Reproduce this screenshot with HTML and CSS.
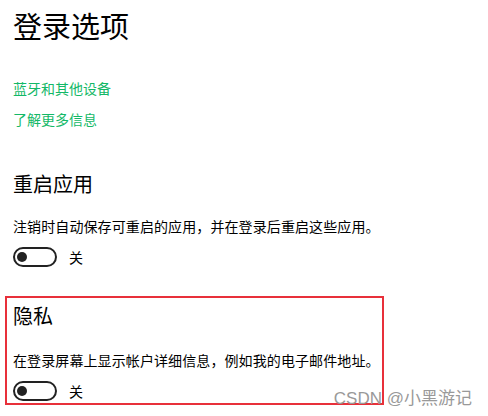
FILE: index.html
```html
<!DOCTYPE html>
<html>
<head>
    <title>登录选项</title>
    <link rel="stylesheet" href="styles.css">
</head>
<body>
    <div class="page">
        <h1 class="title">登录选项</h1>
        <a class="link first" href="#">蓝牙和其他设备</a>
        <a class="link" href="#">了解更多信息</a>

        <div class="section">
            <h2 class="heading">重启应用</h2>
            <p class="desc">注销时自动保存可重启的应用，并在登录后重启这些应用。</p>
            <div class="switch-row">
                <span class="switch"><span class="knob"></span></span>
                <span class="state">关</span>
            </div>
        </div>

        <div class="section marked">
            <h2 class="heading">隐私</h2>
            <p class="desc">在登录屏幕上显示帐户详细信息，例如我的电子邮件地址。</p>
            <div class="switch-row">
                <span class="switch"><span class="knob"></span></span>
                <span class="state">关</span>
            </div>
        </div>
    </div>
    <div class="watermark">CSDN @小黑游记</div>
</body>
</html>
```

FILE: styles.css
```css
body {
    font-family: "Noto Sans CJK SC", "Liberation Sans", sans-serif;
    color: #000;
    background: #fff;
    margin: 0;
    padding: 0;
    height: 100vh;
    overflow: hidden;
    position: relative;
}
.page {
    padding: 5px 0 0 13px;
}
.title {
    font-size: 29px;
    font-weight: normal;
    line-height: 40px;
    margin: 0 0 33px 0;
}
.link {
    display: block;
    font-size: 14px;
    line-height: 20px;
    color: #13b867;
    text-decoration: none;
    margin-top: 11px;
}
.link.first {
    margin-top: 0;
}
.section {
    margin-top: 41px;
}
.heading {
    font-size: 20px;
    font-weight: normal;
    line-height: 28px;
    margin: 0;
}
.desc {
    font-size: 14px;
    line-height: 20px;
    letter-spacing: 0.1px;
    margin: 18px 0 11px 0;
}
.switch-row {
    display: flex;
    align-items: center;
    height: 20px;
}
.switch {
    box-sizing: border-box;
    width: 44px;
    height: 20px;
    border: 2px solid #222;
    border-radius: 10px;
    display: flex;
    align-items: center;
    padding-left: 2px;
}
.knob {
    width: 10px;
    height: 10px;
    border-radius: 50%;
    background: #222;
}
.state {
    font-size: 14px;
    margin-left: 12px;
}
.marked {
    box-sizing: border-box;
    width: 379px;
    margin: 29px 0 0 -8px;
    padding: 4px 0 2px 6px;
    border: 2px solid #e8303a;
}
.marked .desc {
    margin-top: 20px;
}
.watermark {
    position: absolute;
    right: 16px;
    bottom: 7px;
    font-size: 17px;
    line-height: 20px;
    color: #999;
    font-family: "Liberation Sans", "Noto Sans CJK SC", sans-serif;
}
```
